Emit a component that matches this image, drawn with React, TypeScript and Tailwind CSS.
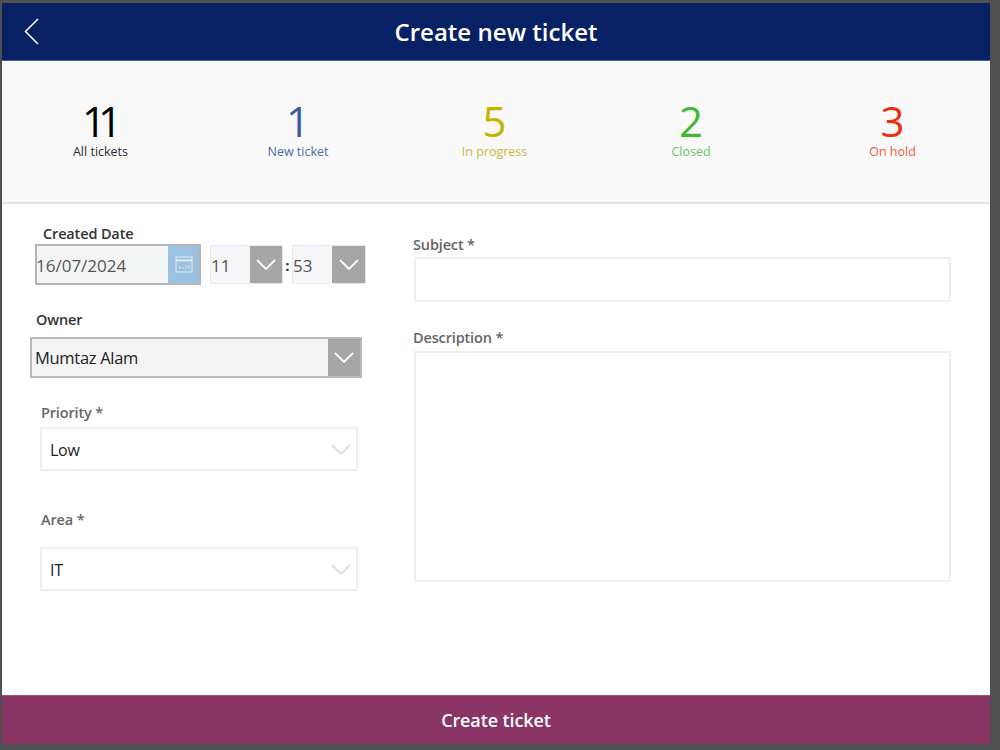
import React from "react";

function Chev({ color = "#fff", w = 20, h = 11, sw = 1.8 }: { color?: string; w?: number; h?: number; sw?: number }) {
  return (
    <svg width={w} height={h} viewBox="0 0 20 11" fill="none" preserveAspectRatio="none">
      <path d="M1 1 L10 10 L19 1" stroke={color} strokeWidth={sw} />
    </svg>
  );
}

function Stat({ n, label, color, labelColor, tight }: { n: string; label: string; color: string; labelColor: string; tight?: boolean }) {
  return (
    <div className="flex flex-col items-center">
      <div className={(tight ? "pr-[5px] tracking-[-8px] " : "") + "text-[42px] font-medium leading-[40px]"} style={{ color }}>{n}</div>
      <div className="mt-[2px] text-[12.5px] leading-[17px]" style={{ color: labelColor }}>{label}</div>
    </div>
  );
}

function LightSelect({ value, className }: { value: string; className: string }) {
  return (
    <div className={"flex h-11 items-center justify-between border-2 border-[#efefef] bg-white pl-2 pr-[5px] " + className}>
      <span className="pt-[2px] text-[16px] tracking-[-0.3px] text-[#222]">{value}</span>
      <Chev color="#dedede" w={20} h={11} sw={2} />
    </div>
  );
}

const label = "text-[14.5px] font-semibold leading-[19px] tracking-[-0.15px]";

export default function App() {
  return (
    <div className="h-[750px] w-[1000px] overflow-hidden bg-[#505050] pb-[6px] pl-[2px] pr-[10px] pt-[3px] font-['Open_Sans',sans-serif]">
      <div className="flex h-full flex-col bg-white">
        <header className="relative flex h-[58px] shrink-0 items-center justify-center border-b border-[#4a5a9a] bg-[#082164]">
          <svg className="absolute left-[22px] top-[15px]" width="15" height="27" viewBox="0 0 15 27" fill="none">
            <path d="M14 1 L1.5 13.5 L14 26" stroke="#fff" strokeWidth="1.5" />
          </svg>
          <h1 className="text-[24px] font-semibold text-white">Create new ticket</h1>
        </header>

        <section className="grid h-[143px] shrink-0 grid-cols-[197px_198px_195px_198px_1fr] items-start border-b-2 border-[#e3e3e3] bg-[#f9f9f9] pt-[40px]">
          <Stat n="11" label="All tickets" color="#000000" labelColor="#2b2b33" tight />
          <Stat n="1" label="New ticket" color="#3b5aa3" labelColor="#4b6aa8" />
          <Stat n="5" label="In progress" color="#c4b400" labelColor="#c9b93a" />
          <Stat n="2" label="Closed" color="#41b92f" labelColor="#62c566" />
          <div className="pl-[5px]"><Stat n="3" label="On hold" color="#e8300f" labelColor="#ee5a44" /></div>
        </section>

        <main className="flex flex-1">
          <div className="w-[411px] shrink-0 pt-[20px]">
            <div className={"pl-[41px] text-[#333] " + label}>Created Date</div>
            <div className="mt-[1px] flex items-start pl-[33px]">
              <div className="flex h-[41px] w-[166px] border-2 border-[#b5b5b5] bg-[#f3f5f5]">
                <span className="-ml-px flex-1 text-[17px] leading-[40px] text-[#555]">16/07/2024</span>
                <div className="flex w-[31px] items-center justify-center bg-[#9ac1e0]">
                  <svg width="18" height="17" viewBox="0 0 18 17" fill="none" stroke="#dfeaf5" strokeWidth="1">
                    <rect x="1" y="1" width="16" height="15" />
                    <path d="M1 4.5H17" strokeWidth="2" />
                    <path d="M5 10v3M8 11v2M11 9v4M14 9v4" />
                  </svg>
                </div>
              </div>
              <div className="ml-[9px] mt-px flex h-[39px] w-[73px] border border-[#e6ebf3] bg-[#f4f6f8]">
                <span className="w-[39px] text-[17px] leading-[40px] text-[#555]">11</span>
                <div className="flex flex-1 items-center justify-center bg-[#a6a6a6]"><Chev w={20} h={11} /></div>
              </div>
              <span className="w-[9px] text-center text-[15px] font-bold leading-[42px] text-[#333]">:</span>
              <div className="mt-px flex h-[39px] w-[74px] border border-[#e6ebf3] bg-[#f4f6f8]">
                <span className="w-[39px] text-[17px] leading-[40px] text-[#555]">53</span>
                <div className="flex flex-1 items-center justify-center bg-[#a6a6a6]"><Chev w={20} h={11} /></div>
              </div>
            </div>

            <div className={"mt-[24px] pl-[34px] text-[#333] " + label}>Owner</div>
            <div className="ml-[28px] mt-[8px] flex h-[41px] w-[332px] border-2 border-[#b9b9b9] bg-[#f3f3f3]">
              <span className="flex-1 pl-[3px] text-[16.5px] leading-[37px] tracking-[-0.3px] text-[#222]">Mumtaz Alam</span>
              <div className="flex w-[32px] items-center justify-center bg-[#a6a6a6]"><Chev w={20} h={11} /></div>
            </div>

            <div className={"mt-[25px] pl-[39px] text-[#666] " + label}>Priority *</div>
            <LightSelect value="Low" className="ml-[38px] mt-[5px] w-[318px]" />

            <div className={"mt-[39px] pl-[39px] text-[#666] " + label}>Area *</div>
            <LightSelect value="IT" className="ml-[38px] mt-[18px] w-[318px]" />
          </div>

          <div className="flex-1 pt-[31px]">
            <div className={"text-[#666] " + label}>Subject *</div>
            <div className="ml-px mt-[3px] h-[45px] w-[537px] border-2 border-[#efefef]" />
            <div className={"mt-[26px] text-[#666] " + label}>Description *</div>
            <div className="ml-px mt-[4px] h-[231px] w-[537px] border-2 border-[#efefef]" />
          </div>
        </main>

        <button className="h-[49px] shrink-0 border-t border-[#a0527e] bg-[#8a3565] text-[18px] font-semibold tracking-[-0.1px] text-white">Create ticket</button>
      </div>
    </div>
  );
}
